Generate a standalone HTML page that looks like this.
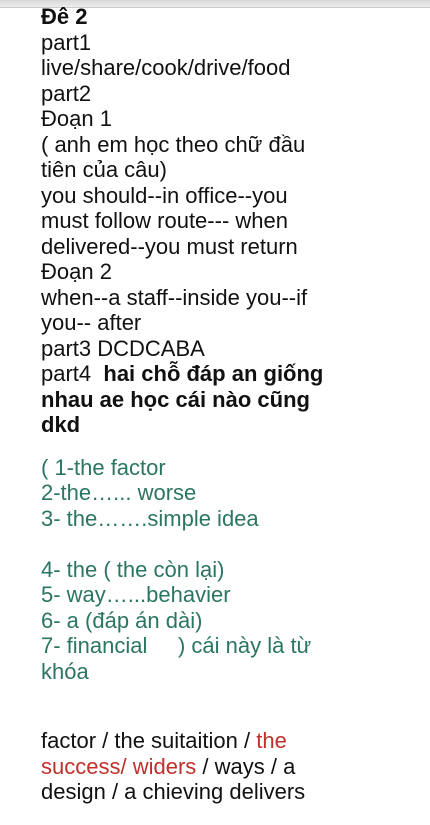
<!DOCTYPE html>
<html><head><meta charset="utf-8"><style>
html,body{margin:0;padding:0;background:#fff;width:430px;height:825px;overflow:hidden}
.bar{position:absolute;top:0;left:0;width:430px;height:7px;background:linear-gradient(#d8d8d8,#eee);border-bottom:1px solid #ccc}
.c{position:absolute;left:41px;top:4px;font-family:"Liberation Sans",Arial,sans-serif;font-size:22px;line-height:25.5px;color:#111;white-space:nowrap}
.g{color:#2b7563;margin-top:17px}.r{color:#c0302a}b{font-weight:bold}
</style></head><body>
<div class="bar"></div>
<div class="c">
<b>Đê 2</b><br>part1<br>live/share/cook/drive/food<br>part2<br>Đoạn 1<br>( anh em học theo chữ đầu<br>tiên của câu)<br>you should--in office--you<br>must follow route--- when<br>delivered--you must return<br>Đoạn 2<br>when--a staff--inside you--if<br>you-- after<br>part3 DCDCABA<br>part4 &nbsp;<b>hai chỗ đáp an giống<br>nhau ae học cái nào cũng<br>dkd</b>
<div class="g">( 1-the factor<br>2-the…... worse<br>3- the…….simple idea<br><br>4- the ( the còn lại)<br>5- way…...behavier<br>6- a (đáp án dài)<br>7- financial &nbsp;&nbsp;&nbsp;&nbsp;) cái này là từ<br>khóa</div>
<div style="margin-top:44px">factor / the suitaition / <span class="r">the<br>success/ widers</span> / ways / a<br>design / a chieving delivers</div>
</div>
</body></html>
